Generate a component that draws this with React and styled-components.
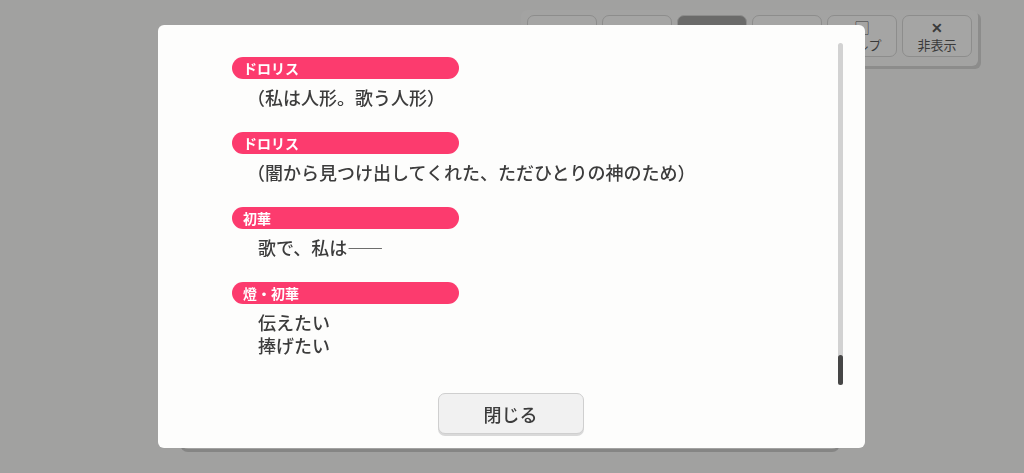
import React from "react";
import styled, { createGlobalStyle } from "styled-components";

const Global = createGlobalStyle`
  html, body { margin: 0; padding: 0; }
  body {
    width: 1024px;
    height: 473px;
    overflow: hidden;
    background: #a1a1a0;
    font-family: "Noto Sans CJK JP", "Noto Sans", sans-serif;
  }
`;

const Page = styled.div`
  position: relative;
  width: 1024px;
  height: 473px;
  display: flex;
  flex-direction: column;
`;

const TopRow = styled.div`
  display: flex;
  justify-content: flex-end;
  padding: 10px 46px 0 0;
`;

const ToolPanel = styled.div`
  display: flex;
  gap: 5px;
  padding: 5px 6px 9px 6px;
  background: #a3a3a2;
  border-radius: 6px;
  box-shadow: 3px 3px 0 #8c8c8b;
`;

const ToolButton = styled.div`
  width: 70px;
  height: 42px;
  box-sizing: border-box;
  border: 1px solid #8d8d8c;
  border-radius: 7px;
  background: ${(p) => (p.$active ? "#6b6b6a" : "#a5a5a4")};
  color: ${(p) => (p.$active ? "#2a2a2a" : "#3a3a3a")};
  display: flex;
  flex-direction: column;
  align-items: center;
  justify-content: center;
  gap: 4px;
  font-size: 13px;
  line-height: 13px;
`;

const ToolIcon = styled.div`
  font-size: 14px;
  font-weight: 700;
  line-height: 13px;
`;

const ToolLabel = styled.div`
  white-space: nowrap;
`;

const Spacer = styled.div`
  flex: 1;
`;

const MessageBox = styled.div`
  margin: 0 184px 24px 180px;
  height: 70px;
  border-radius: 8px;
  background: #a3a3a2;
  box-shadow: 0 3px 0 #858584;
`;

const Overlay = styled.div`
  position: fixed;
  inset: 0;
  display: flex;
  align-items: center;
  justify-content: center;
`;

const Modal = styled.div`
  width: 707px;
  height: 423px;
  box-sizing: border-box;
  margin-left: -1px;
  background: #fdfdfc;
  border-radius: 6px;
  display: flex;
  flex-direction: column;
  padding: 18px 22px 14px 0;
`;

const Body = styled.div`
  height: 342px;
  display: flex;
  overflow: hidden;
`;

const Content = styled.div`
  flex: 1;
  padding: 14px 0 0 74px;
  display: flex;
  flex-direction: column;
`;

const Entry = styled.div`
  display: flex;
  flex-direction: column;
  margin-bottom: 23px;
`;

const NameBar = styled.div`
  width: 227px;
  height: 22px;
  box-sizing: border-box;
  border-radius: 11px;
  background: #fc3b6e;
  color: #ffffff;
  font-size: 14px;
  font-weight: 700;
  line-height: 22px;
  padding-left: 11px;
`;

const Lines = styled.div`
  margin-top: 7px;
  padding-left: ${(p) => (p.$paren ? "15px" : "26px")};
  color: #3c3c3c;
  font-size: 18px;
  font-weight: 500;
  line-height: 23px;
`;

const Line = styled.div`
  white-space: nowrap;
  height: 23px;
`;

const Scrollbar = styled.div`
  width: 5px;
  margin-left: 8px;
  border-radius: 3px;
  background: #d2d2d2;
  display: flex;
  flex-direction: column;
  justify-content: flex-end;
`;

const Thumb = styled.div`
  height: 30px;
  border-radius: 3px;
  background: #464646;
`;

const Footer = styled.div`
  flex: 1;
  display: flex;
  justify-content: center;
  align-items: flex-start;
  padding: 8px 0 0 22px;
`;

const CloseButton = styled.button`
  width: 146px;
  height: 41px;
  margin-left: -2px;
  box-sizing: border-box;
  border: 1px solid #cfcfcf;
  border-radius: 7px;
  background: #f1f1f1;
  box-shadow: 0 2px 0 #d9d9d9;
  color: #3c3c3c;
  font-family: "Noto Sans CJK JP", sans-serif;
  font-size: 18px;
  font-weight: 500;
  line-height: 20px;
  padding: 0;
`;

const entries = [
  { name: "ドロリス", lines: ["（私は人形。歌う人形）"], paren: true },
  { name: "ドロリス", lines: ["（闇から見つけ出してくれた、ただひとりの神のため）"], paren: true },
  { name: "初華", lines: ["歌で、私は――"] },
  { name: "燈・初華", lines: ["伝えたい", "捧げたい"] },
];

const tools = [
  { icon: "", label: "" },
  { icon: "", label: "" },
  { icon: "▶▶", label: "", active: true },
  { icon: "", label: "" },
  { icon: "▢", label: "ヘルプ" },
  { icon: "✕", label: "非表示" },
];

export default function App() {
  return (
    <>
      <Global />
      <Page>
        <TopRow>
          <ToolPanel>
            {tools.map((t, i) => (
              <ToolButton key={i} $active={t.active}>
                <ToolIcon>{t.icon}</ToolIcon>
                <ToolLabel>{t.label}</ToolLabel>
              </ToolButton>
            ))}
          </ToolPanel>
        </TopRow>
        <Spacer />
        <MessageBox />
        <Overlay>
          <Modal>
            <Body>
              <Content>
                {entries.map((e, i) => (
                  <Entry key={i}>
                    <NameBar>{e.name}</NameBar>
                    <Lines $paren={e.paren}>
                      {e.lines.map((l, j) => (
                        <Line key={j}>{l}</Line>
                      ))}
                    </Lines>
                  </Entry>
                ))}
              </Content>
              <Scrollbar>
                <Thumb />
              </Scrollbar>
            </Body>
            <Footer>
              <CloseButton>閉じる</CloseButton>
            </Footer>
          </Modal>
        </Overlay>
      </Page>
    </>
  );
}
